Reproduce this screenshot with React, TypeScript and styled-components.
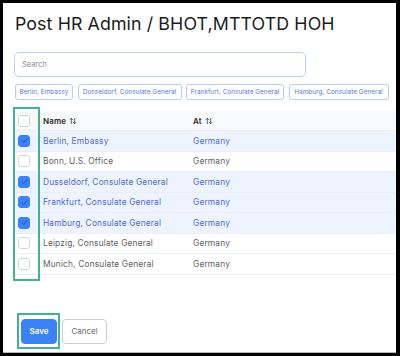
import React from "react";
import styled, { createGlobalStyle } from "styled-components";

const Global = createGlobalStyle`
  html, body { margin: 0; padding: 0; background: #000; }
  body { width: 400px; height: 356px; overflow: hidden; font-family: "Inter", "Noto Sans", sans-serif; }
  #root { width: 400px; height: 356px; }
`;

const Frame = styled.div`
  width: 400px;
  height: 356px;
  padding: 3px 4px 3px 3px;
  box-sizing: border-box;
`;

const Panel = styled.div`
  position: relative;
  width: 393px;
  height: 350px;
  background: #fff;
  border-bottom: 1px solid #b8b8b8;
  box-sizing: border-box;
  padding: 9px 0 0 11px;
  display: flex;
  flex-direction: column;
`;

const Title = styled.h1`
  margin: 0 0 0 1px;
  font-size: 17.8px;
  line-height: 24px;
  font-weight: 400;
  color: #1c1c1c;
  letter-spacing: 0.1px;
`;

const Search = styled.div`
  margin-top: 16px;
  width: 292px;
  height: 25px;
  box-sizing: border-box;
  border: 1px solid #bccff3;
  border-radius: 5px;
  display: flex;
  align-items: center;
  padding-left: 7px;
  font-size: 7.5px;
  color: #8a8a8a;
`;

const Chips = styled.div`
  margin-top: 7px;
  display: flex;
  gap: 4.5px;
  padding-left: 1px;
`;

const Chip = styled.div<{ $w: number }>`
  width: ${(p) => p.$w}px;
  height: 16px;
  box-sizing: border-box;
  border: 1px solid #b9cdf4;
  border-radius: 3px;
  display: flex;
  align-items: center;
  justify-content: center;
  font-size: 6.4px;
  letter-spacing: 0.05px;
  color: #5a7ad4;
  white-space: nowrap;
`;

const Table = styled.div`
  margin-top: 11px;
  display: flex;
  flex-direction: column;
`;

const Row = styled.div<{ $sel?: boolean; $head?: boolean }>`
  display: grid;
  grid-template-columns: 29px 150px 1fr;
  align-items: center;
  height: ${(p) => (p.$head ? "20px" : "20.5px")};
  box-sizing: border-box;
  border-bottom: 1px solid #eceef2;
  background: ${(p) => (p.$head ? "#f8f9fb" : p.$sel ? "#eef4ff" : "#fff")};
  color: ${(p) => (p.$head ? "#2b2b2b" : p.$sel ? "#4f6bd4" : "#5f5f5f")};
  font-size: ${(p) => (p.$head ? "8px" : "8.4px")};
  letter-spacing: 0.15px;
  font-weight: ${(p) => (p.$head ? 600 : 400)};
`;

const Cell = styled.div`
  display: flex;
  align-items: center;
  gap: 3px;
  white-space: nowrap;
`;

const BoxCell = styled.div`
  padding-left: 4px;
  display: flex;
  align-items: center;
`;

const Box = styled.div<{ $on?: boolean }>`
  width: 12px;
  height: 12px;
  box-sizing: border-box;
  border-radius: 3px;
  border: 1px solid ${(p) => (p.$on ? "#3b82f6" : "#d3d7de")};
  background: ${(p) => (p.$on ? "#3b82f6" : "#fff")};
  display: flex;
  align-items: center;
  justify-content: center;
`;

const Buttons = styled.div`
  margin-top: 44px;
  padding-left: 7px;
  display: flex;
  gap: 5px;
`;

const Btn = styled.div<{ $primary?: boolean }>`
  height: 25px;
  width: ${(p) => (p.$primary ? "36px" : "45px")};
  box-sizing: border-box;
  border-radius: 4px;
  display: flex;
  align-items: center;
  justify-content: center;
  font-size: 8px;
  font-weight: ${(p) => (p.$primary ? 600 : 400)};
  background: ${(p) => (p.$primary ? "#3b82f6" : "#fff")};
  color: ${(p) => (p.$primary ? "#fff" : "#6b6b6b")};
  border: 1px solid ${(p) => (p.$primary ? "#3b82f6" : "#cfcfcf")};
`;

const Mark = styled.div<{ $l: number; $t: number; $w: number; $h: number }>`
  position: absolute;
  left: ${(p) => p.$l}px;
  top: ${(p) => p.$t}px;
  width: ${(p) => p.$w}px;
  height: ${(p) => p.$h}px;
  box-sizing: border-box;
  border: 2px solid #41b394;
  pointer-events: none;
`;

const SortIcon = () => (
  <svg width="8" height="8" viewBox="0 0 24 24" fill="none" stroke="#333" strokeWidth="2.2" strokeLinecap="round" strokeLinejoin="round">
    <path d="m3 8 4-4 4 4" />
    <path d="M7 4v16" />
    <path d="m21 16-4 4-4-4" />
    <path d="M17 20V4" />
  </svg>
);

const Check = () => (
  <svg width="9" height="9" viewBox="0 0 16 16" fill="none" stroke="#1d4a9e" strokeWidth="1.5" strokeLinecap="round" strokeLinejoin="round">
    <path d="M3.5 8.5l3 3 6-6.5" />
  </svg>
);

const chips: [string, number][] = [
  ["Berlin, Embassy", 58],
  ["Dusseldorf, Consulate General", 104],
  ["Frankfurt, Consulate General", 98],
  ["Hamburg, Consulate General", 100],
];

const rows: [string, boolean][] = [
  ["Berlin, Embassy", true],
  ["Bonn, U.S. Office", false],
  ["Dusseldorf, Consulate General", true],
  ["Frankfurt, Consulate General", true],
  ["Hamburg, Consulate General", true],
  ["Leipzig, Consulate General", false],
  ["Munich, Consulate General", false],
];

export default function App() {
  return (
    <>
      <Global />
      <Frame>
        <Panel>
          <Title>Post HR Admin / BHOT,MTTOTD HOH</Title>
          <Search>Search</Search>
          <Chips>
            {chips.map(([t, w]) => (
              <Chip key={t} $w={w}>{t}</Chip>
            ))}
          </Chips>
          <Table>
            <Row $head>
              <BoxCell><Box /></BoxCell>
              <Cell>Name <SortIcon /></Cell>
              <Cell>At <SortIcon /></Cell>
            </Row>
            {rows.map(([n, s]) => (
              <Row key={n} $sel={s}>
                <BoxCell><Box $on={s}>{s && <Check />}</Box></BoxCell>
                <Cell>{n}</Cell>
                <Cell>Germany</Cell>
              </Row>
            ))}
          </Table>
          <Buttons>
            <Btn $primary>Save</Btn>
            <Btn>Cancel</Btn>
          </Buttons>
          <Mark $l={10} $t={104} $w={27} $h={174} />
          <Mark $l={14} $t={310} $w={43} $h={36} />
        </Panel>
      </Frame>
    </>
  );
}
